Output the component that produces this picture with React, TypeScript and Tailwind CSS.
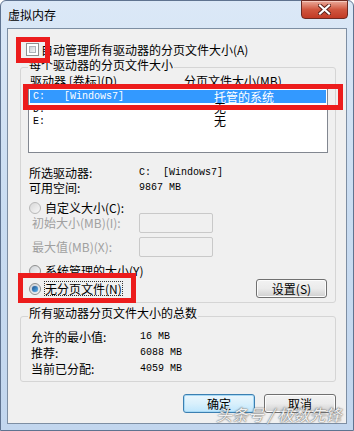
import React from "react";

const CJK = "font-['Noto_Sans_CJK_SC','Noto_Sans',sans-serif]";
const MONO = "font-['Liberation_Mono','Noto_Sans_CJK_SC',monospace]";

function Checkbox() {
  return (
    <div className="w-[13px] h-[13px] border border-[#8e8f8f] bg-white p-[2px] shrink-0">
      <div className="w-full h-full border border-[#aeb3b9] bg-gradient-to-br from-[#cbcfd5] to-[#f6f6f6]" />
    </div>
  );
}

function Radio({ checked = false, dim = false }: { checked?: boolean; dim?: boolean }) {
  return (
    <div
      className={`w-[12px] h-[12px] rounded-full border shrink-0 flex items-center justify-center ${
        dim ? "border-[#b8b8b8] bg-gradient-to-br from-[#d8d8d8] to-[#f8f8f8]" : "border-[#8e8f8f] bg-gradient-to-br from-[#d0d3d7] to-[#fafafa]"
      }`}
    >
      {checked && (
        <div className="w-[6px] h-[6px] rounded-full bg-gradient-to-br from-[#1b4f8a] to-[#5cb4f0] shadow-[0_0_1px_#2a6bb0]" />
      )}
    </div>
  );
}

function Btn({ label, focus = false, w }: { label: string; focus?: boolean; w: string }) {
  return (
    <div
      className={`${w} h-[19px] rounded-[3px] border flex items-center justify-center text-[12px] leading-none ${
        focus
          ? "border-[#3c7fb1] bg-gradient-to-b from-[#eaf6fd] via-[#d9f0fc] to-[#bee6fd] shadow-[inset_0_0_0_1px_#a7d9f5]"
          : "border-[#707070] bg-gradient-to-b from-[#f2f2f2] via-[#ebebeb] to-[#cfcfcf] shadow-[inset_0_0_0_1px_#fcfcfc]"
      }`}
    >
      {label}
    </div>
  );
}

export default function App() {
  return (
    <div className={`w-[354px] h-[431px] relative overflow-hidden ${CJK} text-[12px] text-black`}>
      <div className="w-full h-full border border-[#5f7390] rounded-t-[6px] bg-gradient-to-b from-[#dbe8f7] via-[#c9dcf1] to-[#c2d6ee]">
        {/* Title bar */}
        <div className="h-[27px] flex items-start justify-between pl-[7px] pr-[5px]">
          <span className="mt-[6px] leading-[16px] text-[12px]">虚拟内存</span>
          <div className="w-[47px] h-[19px] -mt-px rounded-b-[4px] border border-[#6e2a22] bg-gradient-to-b from-[#e9a99a] via-[#d0563f] to-[#c23a25] flex items-center justify-center shadow-[inset_0_1px_0_#f5c8bd]">
            <svg width="13" height="11" viewBox="0 0 13 11">
              <path d="M2 1.5 L11 9.5 M11 1.5 L2 9.5" stroke="#5a2018" strokeWidth="4" strokeLinecap="square" />
              <path d="M2 1.5 L11 9.5 M11 1.5 L2 9.5" stroke="#ffffff" strokeWidth="2.2" strokeLinecap="square" />
            </svg>
          </div>
        </div>

        {/* Client area */}
        <div className="mx-[6px] h-[396px] border border-[#7d8ea3] bg-[#f0f0f0]">
          <div className="mt-[14px] pl-[18px] flex items-center gap-[2px] h-[13px]">
            <Checkbox />
            <span className="leading-[13px]">自动管理所有驱动器的分页文件大小(A)</span>
          </div>

          {/* Group 1 */}
          <fieldset className="mt-[3px] ml-[12px] mr-[10px] border border-[#d5d5d5] rounded-[3px] px-[7px] pb-[5px]">
            <legend className="px-[1px] h-[16px] leading-[12px] text-[12px]">每个驱动器的分页文件大小</legend>
            <div className="flex h-[12px] leading-[12px] pl-[2px]">
              <span className="w-[154px]">驱动器 [卷标](D)</span>
              <span>分页文件大小(MB)</span>
            </div>
            <div className="h-[66px] border border-[#828790] bg-white pt-[2px] px-px">
              <div className="flex items-center h-[13px] bg-[#3399ff] text-white pl-[3px]">
                <span className={`${MONO} text-[10px] w-[31px]`}>C:</span>
                <span className={`${MONO} text-[10px] w-[150px]`}>[Windows7]</span>
                <span className="leading-[13px]">托管的系统</span>
              </div>
              <div className="flex items-center h-[12px] pl-[3px]">
                <span className={`${MONO} text-[10px] w-[181px]`}>D:</span>
                <span className="leading-[12px] -mt-[2px]">无</span>
              </div>
              <div className="flex items-center h-[12px] pl-[3px]">
                <span className={`${MONO} text-[10px] w-[181px]`}>E:</span>
                <span className="leading-[12px] -mt-[1px]">无</span>
              </div>
            </div>

            <div className="mt-[12px] pl-px">
              <div className="flex h-[15px] leading-[15px]">
                <span className="w-[110px]">所选驱动器:</span>
                <span className={`${MONO} text-[10px] whitespace-pre`}>C:  [Windows7]</span>
              </div>
              <div className="flex h-[15px] leading-[15px]">
                <span className="w-[110px]">可用空间:</span>
                <span className={`${MONO} text-[10px]`}>9867 MB</span>
              </div>
            </div>

            <div className="mt-[7px] h-[12px] flex items-center gap-[4px] pl-px">
              <Radio dim />
              <span className="leading-[12px]">自定义大小(C):</span>
            </div>
            <div className="mt-[-1px] flex items-center h-[20px]">
              <span className="w-[111px] pl-[4px] text-[#a0a0a0]">初始大小(MB)(I):</span>
              <div className="w-[74px] h-[20px] border border-[#c9c9c9] rounded-[2px] bg-[#f0f0f0]" />
            </div>
            <div className="mt-[4px] flex items-center h-[20px]">
              <span className="w-[111px] pl-[4px] text-[#a0a0a0]">最大值(MB)(X):</span>
              <div className="w-[74px] h-[20px] border border-[#c9c9c9] rounded-[2px] bg-[#f0f0f0]" />
            </div>

            <div className="mt-[7px] h-[14px] flex items-center gap-[4px] pl-px">
              <Radio />
              <span className="leading-[14px]">系统管理的大小(Y)</span>
            </div>
            <div className="mt-[2px] h-[17px] flex items-center justify-between pl-px pr-px">
              <div className="flex items-center gap-[3px]">
                <Radio checked />
                <span className="leading-[13px] border border-dotted border-[#333]">无分页文件(N)</span>
              </div>
              <Btn label="设置(S)" w="w-[71px]" />
            </div>
          </fieldset>

          {/* Group 2 */}
          <fieldset className="mt-[3px] ml-[12px] mr-[10px] border border-[#d5d5d5] rounded-[3px] px-[10px] pb-[4px]">
            <legend className="px-[1px] -ml-[3px] h-[20px] leading-[14px] text-[12px]">所有驱动器分页文件大小的总数</legend>
            <div className="mt-[3px]">
              <div className="flex h-[16px] leading-[16px]">
                <span className="w-[109px]">允许的最小值:</span>
                <span className={`${MONO} text-[10px]`}>16 MB</span>
              </div>
              <div className="flex h-[16px] leading-[16px]">
                <span className="w-[109px]">推荐:</span>
                <span className={`${MONO} text-[10px]`}>6088 MB</span>
              </div>
              <div className="flex h-[16px] leading-[16px]">
                <span className="w-[109px]">当前已分配:</span>
                <span className={`${MONO} text-[10px]`}>4059 MB</span>
              </div>
            </div>
          </fieldset>

          <div className="mt-[12px] flex justify-end gap-[9px] pr-[10px]">
            <Btn label="确定" focus w="w-[72px]" />
            <Btn label="取消" w="w-[72px]" />
          </div>
        </div>
      </div>

      {/* Red annotation boxes */}
      <div className="absolute left-[16px] top-[37px] w-[34px] h-[26px] border-[5px] border-[#ec1c1c]" />
      <div className="absolute left-[23px] top-[84px] w-[320px] h-[26px] border-[5px] border-[#ec1c1c]" />
      <div className="absolute left-[18px] top-[273px] w-[118px] h-[30px] border-[5px] border-[#ec1c1c]" />

      {/* Watermark */}
      <div className="absolute left-[216px] top-[404px] whitespace-nowrap text-[16px] leading-[20px] italic text-white/90 [text-shadow:0_0_2px_#6a6a6a,0_0_1px_#555]">
        头条号 / 极数先锋
      </div>
    </div>
  );
}
